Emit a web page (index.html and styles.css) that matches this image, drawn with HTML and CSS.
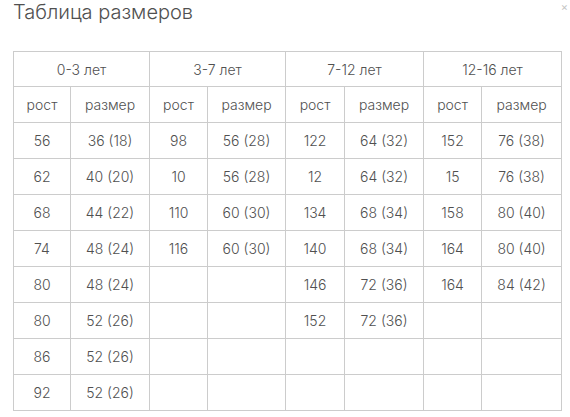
FILE: index.html
```html
<!DOCTYPE html>
<html lang="ru">
<head>
<meta charset="utf-8">
<link rel="stylesheet" href="styles.css">
</head>
<body>
<div class="modal">
  <div class="head">
    <h1 class="title">Таблица размеров</h1>
    <span class="close">×</span>
  </div>
  <table class="sizes">
    <colgroup>
      <col class="c-h"><col class="c-s">
      <col class="c-h2"><col class="c-s2">
      <col class="c-h3"><col class="c-s3">
      <col class="c-h4"><col class="c-s4">
    </colgroup>
    <tr class="group"><td colspan="2">0-3 лет</td><td colspan="2">3-7 лет</td><td colspan="2">7-12 лет</td><td colspan="2">12-16 лет</td></tr>
    <tr><td>рост</td><td>размер</td><td>рост</td><td>размер</td><td>рост</td><td>размер</td><td>рост</td><td>размер</td></tr>
    <tr><td>56</td><td>36 (18)</td><td>98</td><td>56 (28)</td><td>122</td><td>64 (32)</td><td>152</td><td>76 (38)</td></tr>
    <tr><td>62</td><td>40 (20)</td><td>10</td><td>56 (28)</td><td>12</td><td>64 (32)</td><td>15</td><td>76 (38)</td></tr>
    <tr><td>68</td><td>44 (22)</td><td>110</td><td>60 (30)</td><td>134</td><td>68 (34)</td><td>158</td><td>80 (40)</td></tr>
    <tr><td>74</td><td>48 (24)</td><td>116</td><td>60 (30)</td><td>140</td><td>68 (34)</td><td>164</td><td>80 (40)</td></tr>
    <tr><td>80</td><td>48 (24)</td><td></td><td></td><td>146</td><td>72 (36)</td><td>164</td><td>84 (42)</td></tr>
    <tr><td>80</td><td>52 (26)</td><td></td><td></td><td>152</td><td>72 (36)</td><td></td><td></td></tr>
    <tr><td>86</td><td>52 (26)</td><td></td><td></td><td></td><td></td><td></td><td></td></tr>
    <tr><td>92</td><td>52 (26)</td><td></td><td></td><td></td><td></td><td></td><td></td></tr>
  </table>
</div>
</body>
</html>
```
FILE: styles.css
```css
html, body {
  margin: 0;
  padding: 0;
  background: #ffffff;
}
.modal {
  padding: 0 9px 0 13px;
  font-family: Inter, "Noto Sans", sans-serif;
  color: #555555;
}
.head {
  position: relative;
  height: 51px;
}
.title {
  margin: 0;
  font-size: 20px;
  font-weight: 300;
  line-height: 25px;
  color: #505050;
}
.close {
  position: absolute;
  right: -7px;
  top: 1px;
  font-size: 11px;
  line-height: 12px;
  color: #c4c4c4;
}
.sizes {
  border-collapse: collapse;
  table-layout: fixed;
  width: 549px;
  font-size: 14px;
  font-weight: 300;
}
.c-h { width: 57px; }
.c-s { width: 79px; }
.c-h2 { width: 58px; }
.c-s2 { width: 78px; }
.c-h3 { width: 59px; }
.c-s3 { width: 79px; }
.c-h4 { width: 58px; }
.c-s4 { width: 80px; }
.sizes td {
  border: 1px solid #cccccc;
  height: 35px;
  padding: 0;
  text-align: center;
  vertical-align: middle;
  color: #505050;
}
.group td {
  height: 34px;
}
```
